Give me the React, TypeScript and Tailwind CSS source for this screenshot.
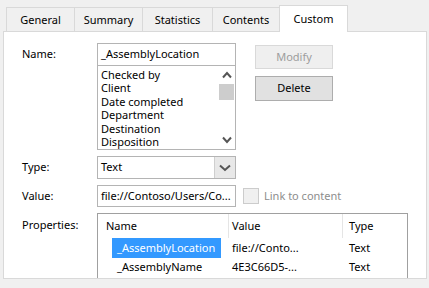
import React from "react";

const font = { fontFamily: '"Noto Sans", "Open Sans", sans-serif' };

function Chevron({ dir, big }: { dir: "up" | "down"; big?: boolean }) {
  const w = big ? 12 : 10;
  return (
    <svg width={w} height="8" viewBox={`0 0 ${w} 8`}>
      {dir === "up" ? (
        <path d={`M1 6.5 L${w / 2} 2 L${w - 1} 6.5`} fill="none" stroke="#555" strokeWidth="2" />
      ) : (
        <path d={`M1 1.5 L${w / 2} 6 L${w - 1} 1.5`} fill="none" stroke="#555" strokeWidth="2" />
      )}
    </svg>
  );
}

export default function App() {
  const tabs = [
    { name: "General", w: 69 },
    { name: "Summary", w: 69 },
    { name: "Statistics", w: 71 },
    { name: "Contents", w: 68 },
  ];
  const items = ["Checked by", "Client", "Date completed", "Department", "Destination", "Disposition"];
  return (
    <div className="w-[429px] h-[288px] bg-[#f0f0f0] text-[11px] text-black overflow-hidden" style={font}>
      <div className="pl-[3px] pr-[2px]">
        <div className="flex items-end h-[31px] pl-[3px]">
          {tabs.map((t, i) => (
            <div
              key={t.name}
              className={`h-[24px] ${i === 0 ? "" : "-ml-px"} border border-b-0 border-[#d9d9d9] bg-[#f0f0f0] flex items-center justify-center pt-[1px]`}
              style={{ width: t.w }}
            >
              {t.name}
            </div>
          ))}
          <div className="-ml-px w-[69px] h-[27px] border border-b-0 border-[#d9d9d9] bg-white flex items-center justify-center relative z-10 -mb-px">
            Custom
          </div>
        </div>
        <div className="h-[248px] border border-[#d9d9d9] bg-white overflow-hidden pt-[11px] pl-[18px]">
          <div className="flex">
            <div className="w-[75px] h-[22px] flex items-center">Name:</div>
            <div className="w-[139px] flex flex-col">
              <div className="h-[23px] border border-[#b4b4b4] flex items-center pl-[3px]">_AssemblyLocation</div>
              <div className="h-[85px] -mt-px border border-[#b4b4b4] flex">
                <div className="flex-1 flex flex-col pl-[3px] pt-[2px]">
                  {items.map((it) => (
                    <div key={it} className="h-[13.4px] leading-[13.4px]">{it}</div>
                  ))}
                </div>
                <div className="w-[17px] flex flex-col items-center">
                  <div className="h-[16px] flex items-center justify-center mt-[1px]">
                    <Chevron dir="up" />
                  </div>
                  <div className="w-[15px] h-[16px] bg-[#cdcdcd] mt-[1px]" />
                  <div className="flex-1" />
                  <div className="h-[16px] flex items-center justify-center mb-[1px]">
                    <Chevron dir="down" />
                  </div>
                </div>
              </div>
            </div>
            <div className="ml-[19px] pt-[2px] flex flex-col gap-[7px]">
              <div className="w-[78px] h-[24px] border border-[#d9d9d9] bg-[#efefef] text-[#9d9d9d] flex items-center justify-center">
                Modify
              </div>
              <div className="w-[78px] h-[25px] border border-[#adadad] bg-[#e1e1e1] flex items-center justify-center">
                Delete
              </div>
            </div>
          </div>
          <div className="flex mt-[6px]">
            <div className="w-[75px] h-[22px] flex items-center">Type:</div>
            <div className="w-[139px] h-[23px] border border-[#b4b4b4] flex">
              <div className="flex-1 flex items-center pl-[3px]">Text</div>
              <div className="w-[21px] border-l border-[#cfcfcf] bg-[#e8e8e8] flex items-center justify-center">
                <Chevron dir="down" big />
              </div>
            </div>
          </div>
          <div className="flex mt-[6px] items-center">
            <div className="w-[75px] h-[22px] flex items-center">Value:</div>
            <div className="w-[139px] h-[22px] border border-[#b4b4b4] flex items-center pl-[3px] whitespace-nowrap overflow-hidden">
              file://Contoso/Users/Co...
            </div>
            <div className="ml-[7px] w-[16px] h-[16px] border border-[#cccccc] bg-[#f0f0f0]" />
            <div className="ml-[5px] text-[#8d8d8d]">Link to content</div>
          </div>
          <div className="flex mt-[6px]">
            <div className="w-[75px] h-[24px] flex items-center">Properties:</div>
            <div className="w-[311px] h-[80px] border border-[#a0a0a0] flex flex-col">
              <div className="h-[24px] flex">
                <div className="w-[131px] border-r border-[#e5e5e5] flex items-center pl-[8px]">Name</div>
                <div className="w-[114px] border-r border-[#e5e5e5] flex items-center pl-[3px]">Value</div>
                <div className="flex-1 flex items-center pl-[6px]">Type</div>
              </div>
              <div className="h-[20px] flex items-center">
                <div className="w-[131px] pl-[14px]">
                  <div className="w-[109px] h-[20px] bg-[#3399ff] text-white flex items-center pl-[5px]">
                    _AssemblyLocation
                  </div>
                </div>
                <div className="w-[114px] pl-[3px]">file://Conto...</div>
                <div className="flex-1 pl-[6px]">Text</div>
              </div>
              <div className="h-[19px] flex items-center">
                <div className="w-[131px] pl-[19px]">_AssemblyName</div>
                <div className="w-[114px] pl-[3px]">4E3C66D5-...</div>
                <div className="flex-1 pl-[6px]">Text</div>
              </div>
            </div>
          </div>
        </div>
      </div>
    </div>
  );
}
